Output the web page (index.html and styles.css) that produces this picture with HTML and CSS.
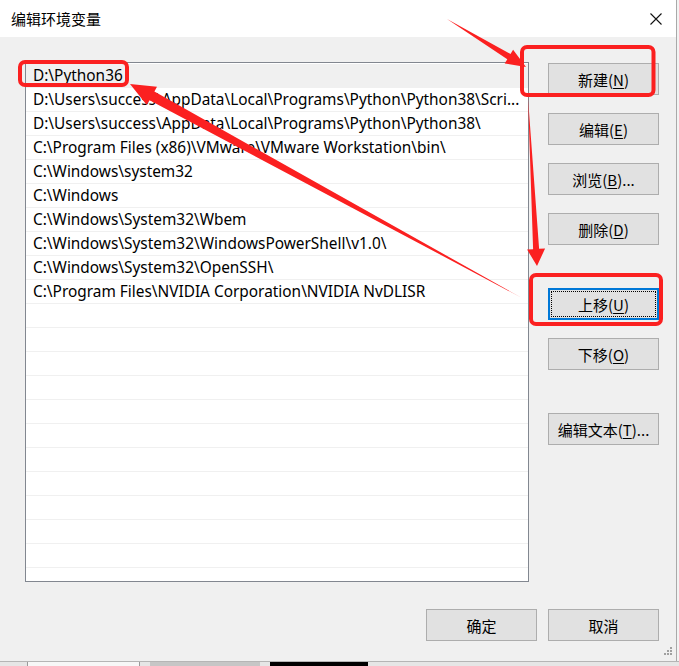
FILE: index.html
```html
<!DOCTYPE html>
<html lang="zh-CN">
<head>
<meta charset="utf-8">
<title>编辑环境变量</title>
<link rel="stylesheet" href="styles.css">
</head>
<body>
<div class="screen">
  <div class="window">
    <div class="titlebar">
      <span class="title">编辑环境变量</span>
      <span class="close">
        <svg width="12" height="12" viewBox="0 0 12 12"><path d="M0.5 0.5 L11.5 11.5 M11.5 0.5 L0.5 11.5" stroke="#111" stroke-width="1.1" fill="none"/></svg>
      </span>
    </div>
    <div class="body">
      <div class="main">
        <div class="list">
          <div class="row sel">D:\Python36</div>
          <div class="row">D:\Users\success\AppData\Local\Programs\Python\Python38\Scri...</div>
          <div class="row">D:\Users\success\AppData\Local\Programs\Python\Python38\</div>
          <div class="row">C:\Program Files (x86)\VMware\VMware Workstation\bin\</div>
          <div class="row">C:\Windows\system32</div>
          <div class="row">C:\Windows</div>
          <div class="row">C:\Windows\System32\Wbem</div>
          <div class="row">C:\Windows\System32\WindowsPowerShell\v1.0\</div>
          <div class="row">C:\Windows\System32\OpenSSH\</div>
          <div class="row">C:\Program Files\NVIDIA Corporation\NVIDIA NvDLISR</div>
          <div class="row"></div><div class="row"></div><div class="row"></div><div class="row"></div>
          <div class="row"></div><div class="row"></div><div class="row"></div><div class="row"></div>
          <div class="row"></div><div class="row"></div><div class="row"></div><div class="row"></div>
        </div>
        <div class="side">
          <button class="btn">新建(<u>N</u>)</button>
          <button class="btn">编辑(<u>E</u>)</button>
          <button class="btn">浏览(<u>B</u>)...</button>
          <button class="btn">删除(<u>D</u>)</button>
          <button class="btn gap focus">上移(<u>U</u>)</button>
          <button class="btn">下移(<u>O</u>)</button>
          <button class="btn gap">编辑文本(<u>T</u>)...</button>
        </div>
      </div>
      <div class="footer">
        <button class="btn">确定</button>
        <button class="btn">取消</button>
      </div>
    </div>
    <svg class="grip" width="12" height="12" viewBox="0 0 12 12">
      <g fill="#a0a0a0">
        <rect x="9" y="0" width="2" height="2"/>
        <rect x="6" y="3" width="2" height="2"/><rect x="9" y="3" width="2" height="2"/>
        <rect x="3" y="6" width="2" height="2"/><rect x="6" y="6" width="2" height="2"/><rect x="9" y="6" width="2" height="2"/>
      </g>
    </svg>
  </div>
  <div class="edge-right"></div>
  <div class="taskbar">
    <div class="tb tb-a"></div>
    <div class="tb tb-b"></div>
    <div class="tb tb-c"></div>
    <div class="tb tb-d"></div>
    <div class="tb tb-e"></div>
  </div>
  <svg class="marks" width="679" height="666" viewBox="0 0 679 666">
    <g fill="none" stroke="#fb2020" stroke-width="4" stroke-linejoin="round">
      <rect x="20" y="62" width="107" height="23" rx="5"/>
      <rect x="522" y="47" width="131.5" height="48" rx="5"/>
      <rect x="531" y="275" width="130" height="49" rx="5"/>
    </g>
    <g fill="#fb2020">
      <polygon points="447,19 510.5,54 513.1,49.8 526,67 504.7,63.4 507.3,59.2"/>
      <polygon points="522,298 154.4,91.6 157,86.8 130,84 146.8,105 149.6,100.3"/>
      <polygon points="528,98 539.1,248.8 545.1,248.5 537,266 527.1,249.5 533.1,249.2"/>
    </g>
  </svg>
</div>
</body>
</html>
```
FILE: styles.css
```css
* { box-sizing: border-box; }
html, body { margin: 0; padding: 0; }
body {
  width: 679px;
  height: 666px;
  overflow: hidden;
  background: #f0f0f0;
  font-family: "Noto Sans", "Noto Sans CJK SC", sans-serif;
  font-size: 15px;
  color: #000;
}
.screen {
  position: relative;
  display: grid;
  grid-template-columns: 676px 3px;
  grid-template-rows: 661px 5px;
  width: 679px;
  height: 666px;
}
.window {
  position: relative;
  background: #f0f0f0;
  display: flex;
  flex-direction: column;
}
.titlebar {
  height: 37px;
  background: #fff;
  display: flex;
  align-items: center;
  justify-content: space-between;
  padding-left: 11px;
}
.title {
  font-family: "Noto Sans CJK SC", sans-serif;
  font-size: 15px;
  color: #000;
}
.close {
  width: 40px;
  height: 37px;
  display: flex;
  align-items: center;
  justify-content: center;
}
.body {
  flex: 1;
  padding: 25px 17px 0 25px;
}
.main {
  display: flex;
  gap: 19px;
}
.list {
  width: 504px;
  height: 520px;
  border: 1px solid #828790;
  background: #fff;
  padding-top: 1px;
  overflow: hidden;
}
.row {
  height: 24px;
  border-bottom: 1px solid #f0f0f0;
  padding: 0 6px 0 7px;
  line-height: 24px;
  white-space: nowrap;
  overflow: hidden;
  font-size: 15.4px;
}
.row.sel { background: #f0f0f0; }
.side {
  width: 111px;
  display: flex;
  flex-direction: column;
  padding-top: 1px;
}
.btn {
  width: 111px;
  height: 32px;
  margin: 0;
  padding: 0;
  background: #e1e1e1;
  border: 1px solid #adadad;
  font-family: "Noto Sans CJK SC", sans-serif;
  font-size: 15px;
  color: #000;
  line-height: 1;
}
.side .btn + .btn { margin-top: 18px; }
.side .btn.gap { margin-top: 43px; }
.btn.focus {
  position: relative;
  border: 2px solid #0078d7;
}
.btn.focus::after {
  content: "";
  position: absolute;
  inset: 1px;
  border: 1px dotted #000;
}
.btn u { text-decoration-thickness: 1px; text-underline-offset: 2px; }
.footer {
  display: flex;
  justify-content: flex-end;
  gap: 11px;
  margin-top: 27px;
}
.grip {
  position: absolute;
  right: 3px;
  bottom: 2px;
}
.edge-right {
  background: #f3f3f3;
  border-left: 1px solid #a9a9a9;
}
.taskbar {
  grid-column: 1 / span 2;
  display: flex;
  background: #e6e6e6;
  border-top: 1px solid #b5b5b5;
}
.tb { height: 100%; }
.tb-a { width: 28px; border-right: 1px solid #9a9a9a; }
.tb-b { width: 112px; background: #f7f7f7; border-right: 1px solid #9a9a9a; }
.tb-c { width: 10px; }
.tb-d { width: 110px; background: #c6c6c6; margin-right: 10px; }
.tb-e { width: 98px; background: #000; }
.marks {
  position: absolute;
  left: 0;
  top: 0;
  pointer-events: none;
  z-index: 5;
}
```
